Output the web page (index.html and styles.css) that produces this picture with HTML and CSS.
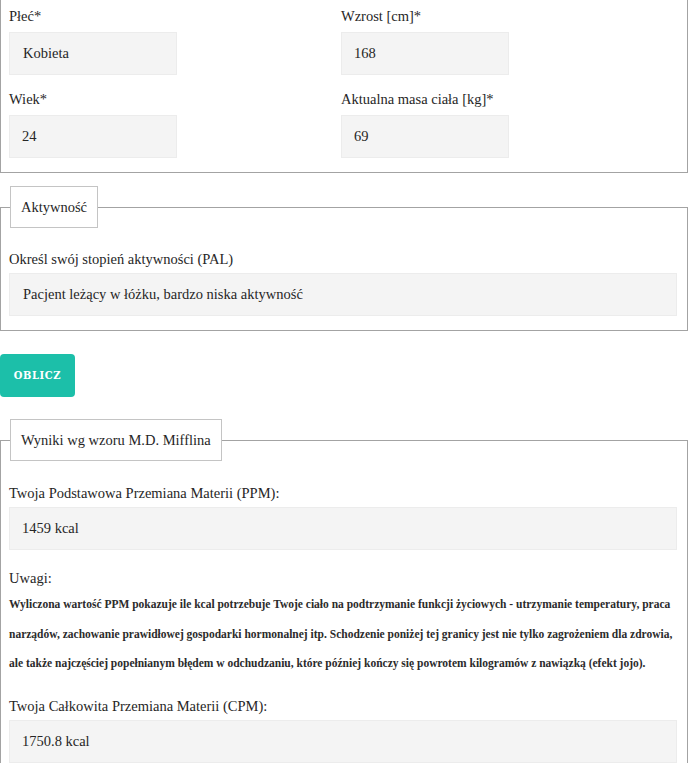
FILE: index.html
```html
<!DOCTYPE html>
<html lang="pl">
<head>
<meta charset="utf-8">
<title>Kalkulator PPM</title>
<link rel="stylesheet" href="styles.css">
</head>
<body>
<div class="page">
  <fieldset class="box box-top">
    <div class="grid2">
      <div class="field">
        <label class="lbl">Płeć*</label>
        <div class="input input-sm input-sel">Kobieta</div>
      </div>
      <div class="field">
        <label class="lbl">Wzrost [cm]*</label>
        <div class="input input-sm">168</div>
      </div>
      <div class="field">
        <label class="lbl">Wiek*</label>
        <div class="input input-sm">24</div>
      </div>
      <div class="field">
        <label class="lbl">Aktualna masa ciała [kg]*</label>
        <div class="input input-sm">69</div>
      </div>
    </div>
  </fieldset>

  <fieldset class="box box-activity">
    <legend class="legend">Aktywność</legend>
    <div class="field">
      <label class="lbl">Określ swój stopień aktywności (PAL)</label>
      <div class="input input-sel">Pacjent leżący w łóżku, bardzo niska aktywność</div>
    </div>
  </fieldset>

  <button class="btn" type="button">OBLICZ</button>

  <fieldset class="box box-results">
    <legend class="legend">Wyniki wg wzoru M.D. Mifflina</legend>
    <div class="field">
      <label class="lbl">Twoja Podstawowa Przemiana Materii (PPM):</label>
      <div class="input">1459 kcal</div>
    </div>
    <div class="notes">
      <div class="lbl">Uwagi:</div>
      <p class="note-text"><span class="note-line">Wyliczona wartość PPM pokazuje ile kcal potrzebuje Twoje ciało na podtrzymanie funkcji życiowych - utrzymanie temperatury, praca</span> <span class="note-line">narządów, zachowanie prawidłowej gospodarki hormonalnej itp. Schodzenie poniżej tej granicy jest nie tylko zagrożeniem dla zdrowia,</span> <span class="note-line">ale także najczęściej popełnianym błędem w odchudzaniu, które później kończy się powrotem kilogramów z nawiązką (efekt jojo).</span></p>
    </div>
    <div class="field field-cpm">
      <label class="lbl">Twoja Całkowita Przemiana Materii (CPM):</label>
      <div class="input">1750.8 kcal</div>
    </div>
  </fieldset>
</div>
</body>
</html>
```

FILE: styles.css
```css
html, body {
  margin: 0;
  padding: 0;
  background: #ffffff;
}

body {
  font-family: "Liberation Serif", "Times New Roman", serif;
  font-size: 14.5px;
  color: #262626;
}

.page {
  width: 688px;
}

.box {
  margin: 0;
  border: 1px solid #a3a3a3;
  padding: 0 10px 14px 8px;
  min-width: 0;
}

.box-top {
  border-top: 0;
  padding-top: 6px;
}

.box-activity {
  margin-top: 13px;
  padding-top: 21px;
}

.box-results {
  margin-top: 22px;
  padding-top: 22px;
  padding-bottom: 0;
  border-bottom: 0;
}

.legend {
  border: 1px solid #c4c4c4;
  padding: 0 10px;
  margin-left: 1px;
  line-height: 40px;
  background: #fff;
}

.grid2 {
  display: grid;
  grid-template-columns: 332px 1fr;
  row-gap: 14px;
}

.lbl {
  display: block;
  line-height: 20px;
  margin-bottom: 6px;
}

.input {
  box-sizing: border-box;
  height: 43px;
  line-height: 41px;
  background: #f4f4f4;
  border: 1px solid #ececec;
  padding: 0 12px;
  color: #262626;
}

.input-sm {
  width: 168px;
}

.input-sel {
  padding-left: 13px;
}

.box-activity .lbl {
  margin-bottom: 4px;
}

.btn {
  display: block;
  margin: 23px 0 0 0;
  width: 75px;
  height: 43px;
  border: 0;
  border-radius: 4px;
  background: #1cbfa9;
  color: #ffffff;
  font-family: "DejaVu Serif", serif;
  font-stretch: condensed;
  font-weight: bold;
  font-size: 11px;
  letter-spacing: 0.6px;
  padding: 0;
  cursor: pointer;
}

.box-results .lbl {
  margin-bottom: 4px;
}

.notes {
  margin-top: 18px;
}

.notes .lbl {
  margin-bottom: 2px;
}

.note-text {
  margin: 0;
  font-size: 11.5px;
  font-weight: bold;
  line-height: 29.5px;
  color: #2b2b2b;
}

.note-line {
  display: block;
  white-space: nowrap;
}

.field-cpm {
  margin-top: 17px;
}
```
